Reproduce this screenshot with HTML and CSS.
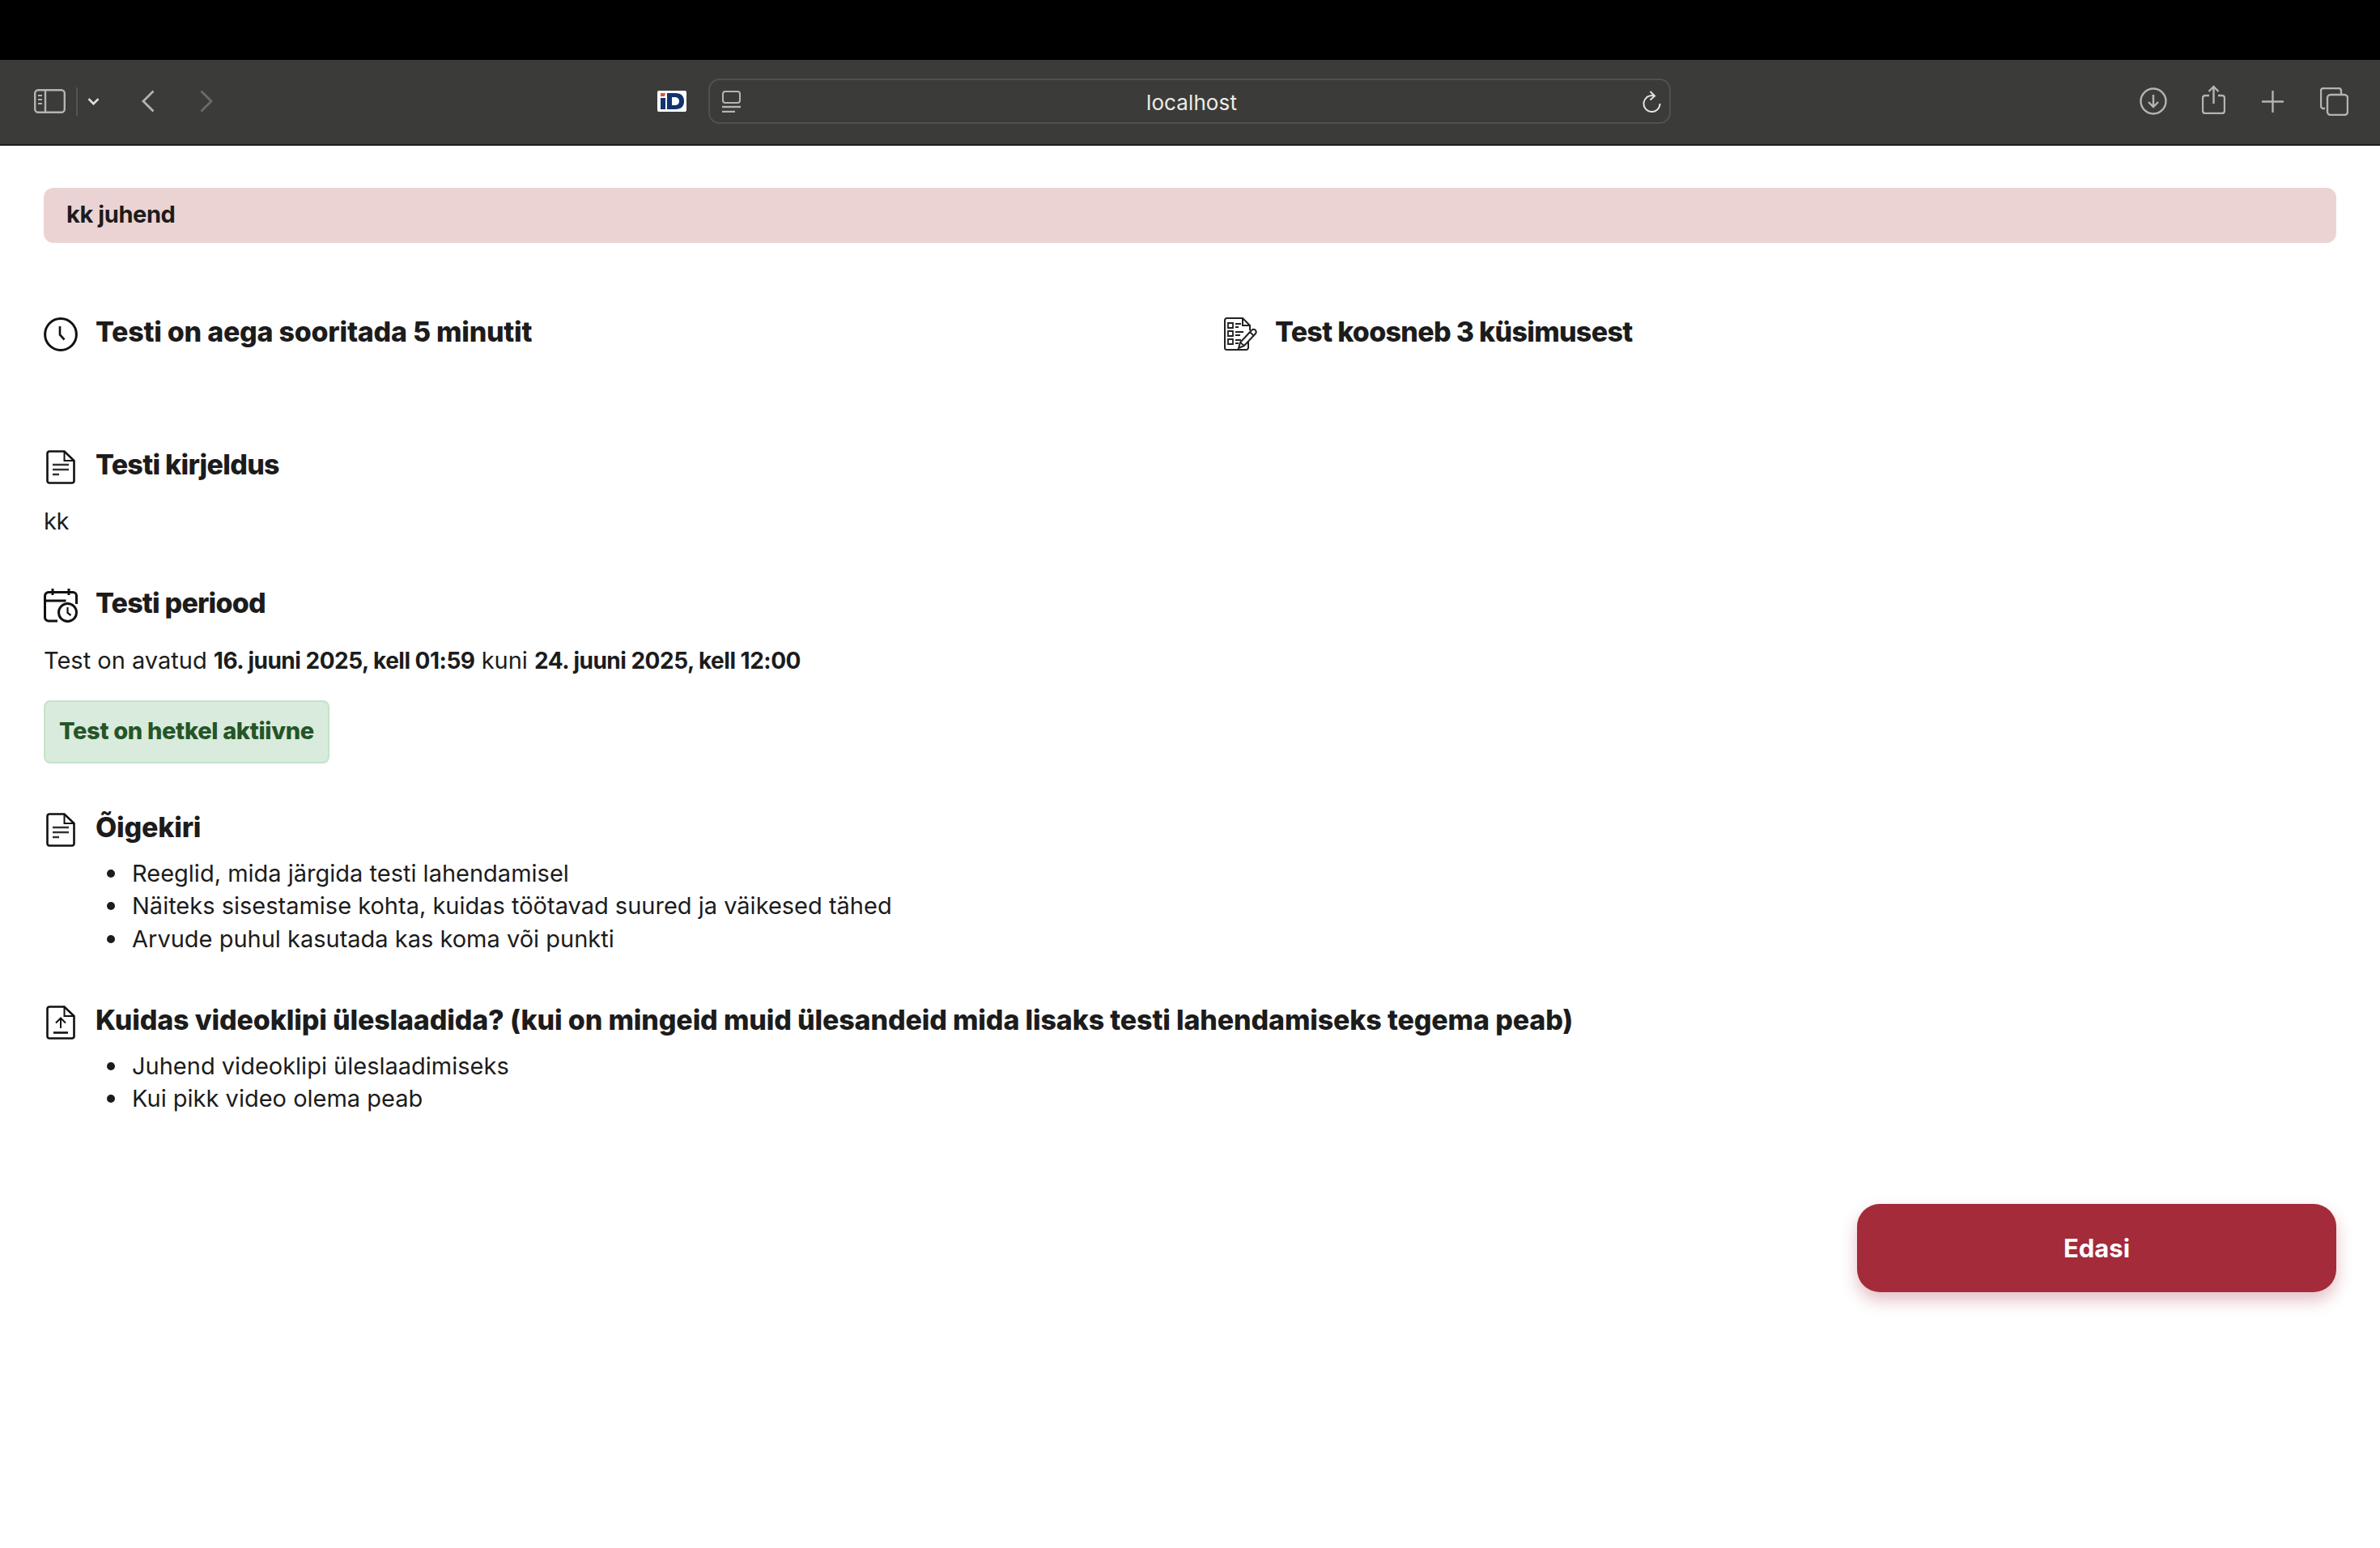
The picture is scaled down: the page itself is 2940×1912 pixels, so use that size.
FILE: index.html
```html
<!DOCTYPE html>
<html lang="et">
<head>
  <meta charset="UTF-8">
  <title>kk juhend</title>
  <link rel="stylesheet" href="styles.css">
</head>
<body>

  <div class="topbar"></div>

  <header class="toolbar">
    <div class="toolbar-left">
      <svg class="ico-sidebar" width="39" height="30" viewBox="0 0 39 30" fill="none" stroke="#b4b4b2" stroke-width="2.4">
        <rect x="1.2" y="1.2" width="36.6" height="27.6" rx="4"/>
        <path d="M14 1.2v27.6"/>
        <path d="M5 8h5M5 13h5M5 18h5" stroke-width="2"/>
      </svg>
      <span class="divider"></span>
      <svg class="ico-chevron" width="15" height="9" viewBox="0 0 15 9" fill="none" stroke="#e2e2e0" stroke-width="2.6">
        <path d="M1.5 1.2l6 6 6-6"/>
      </svg>
      <svg class="ico-back" width="16" height="28" viewBox="0 0 16 28" fill="none" stroke="#b4b4b2" stroke-width="2.8">
        <path d="M14.5 1.5L2 14l12.5 12.5"/>
      </svg>
      <svg class="ico-forward" width="16" height="28" viewBox="0 0 16 28" fill="none" stroke="#6b6b69" stroke-width="2.8">
        <path d="M1.5 1.5L14 14 1.500 26.500"/>
      </svg>
      <svg class="ico-favicon" width="36" height="26" viewBox="0 0 36 26">
        <rect width="36" height="26" rx="2" fill="#fff"/>
        <path d="M4 3h6l-1 4H4z" fill="#e4572e"/>
        <path d="M4 9h6v14H4zM12 3h10c8 0 11 4 11 10s-3 10-11 10H12zM18 8v10h3c4 0 6-2 6-5s-2-5-6-5z" fill="#12336e" fill-rule="evenodd"/>
      </svg>
    </div>

    <div class="address">
      <svg width="23" height="27" viewBox="0 0 23 27" fill="none" stroke="#b4b4b2" stroke-width="2">
        <rect x="1" y="1" width="21" height="14" rx="3"/>
        <path d="M0 20h23" stroke-width="2.400"/>
        <path d="M0 26h16" stroke-width="2.400"/>
      </svg>
      <span class="address-text">localhost</span>
      <svg width="23" height="27" viewBox="0 0 23 27" fill="none" stroke="#e2e2e0" stroke-width="2">
        <path d="M14.500 6.500A10 10 0 1 0 21.500 16"/>
        <path d="M9.500 1l5.500 5.500-5.500 5"/>
      </svg>
    </div>

    <div class="toolbar-right">
      <svg class="ico-download" width="34" height="34" viewBox="0 0 34 34" fill="none" stroke="#b4b4b2" stroke-width="2.400">
        <circle cx="17" cy="17" r="15.500"/>
        <path d="M17 9v15M11 18l6 6 6-6"/>
      </svg>
      <svg class="ico-share" width="29" height="36" viewBox="0 0 29 36" fill="none" stroke="#b4b4b2" stroke-width="2.400">
        <path d="M9 13H4a3 3 0 0 0-3 3v16a3 3 0 0 0 3 3h21a3 3 0 0 0 3-3V16a3 3 0 0 0-3-3h-5"/>
        <path d="M14.500 23V2M8.500 8l6-6 6 6"/>
      </svg>
      <svg class="ico-plus" width="27" height="27" viewBox="0 0 27 27" fill="none" stroke="#b4b4b2" stroke-width="2.400">
        <path d="M13.500 0v27M0 13.500h27"/>
      </svg>
      <svg class="ico-tabs" width="35" height="35" viewBox="0 0 35 35" fill="none" stroke="#b4b4b2" stroke-width="2.400">
        <path d="M6 26H4a3 3 0 0 1-3-3V4a3 3 0 0 1 3-3h19a3 3 0 0 1 3 3v4"/>
        <rect x="9" y="9" width="25" height="25" rx="4"/>
      </svg>
    </div>
  </header>

  <main class="content">
    <div class="banner">kk juhend</div>

    <div class="info-grid">
      <div class="heading-row">
        <svg class="icon" viewBox="0 0 42 42" fill="none" stroke="#111" stroke-width="3">
          <circle cx="21" cy="21" r="19.400"/>
          <path d="M20 11v10.500l5.500 6" stroke-width="2.600"/>
        </svg>
        <h3 class="h-aeg">Testi on aega sooritada 5 minutit</h3>
      </div>
      <div class="heading-row">
        <svg class="icon" viewBox="0 0 42 42" fill="none" stroke="#222" stroke-width="2">
          <path d="M31 29v8.500a2.500 2.500 0 0 1-2.500 2.500h-24A2.500 2.500 0 0 1 2 37.500v-34A2.500 2.500 0 0 1 4.500 1H24l9 9v6"/>
          <path d="M24 1v9h9"/>
          <path d="M6 7h6v6H6zM6 17h6v6H6zM6 27h6v6H6z" stroke-width="1.800"/>
          <path d="M15 8h7M15 12h4M15 18h10M15 22h6M15 28h7M15 32h4" stroke-width="1.800"/>
          <path d="M19 38l2-7 14-15a3 3 0 0 1 5 4L26 35z"/>
          <path d="M21 31l5 4M33 18l4.500 4.500" stroke-width="1.800"/>
        </svg>
        <h3 class="h-koosneb">Test koosneb 3 küsimusest</h3>
      </div>
    </div>

    <section class="block block-kirjeldus">
      <div class="heading-row">
        <svg class="icon" viewBox="0 0 42 42" fill="none" stroke="#111" stroke-width="2.600">
          <path d="M7 1.500h18.500L37.500 13v25a2.500 2.500 0 0 1-2.500 2.500H7A2.500 2.500 0 0 1 4.500 38V4A2.500 2.500 0 0 1 7 1.500z"/>
          <path d="M25.500 1.500V13h12" stroke-width="2"/>
          <path d="M11 18h20M11 24h20M11 30h8" stroke="#333"/>
        </svg>
        <h3 class="h-kirjeldus">Testi kirjeldus</h3>
      </div>
      <p class="text text-kk">kk</p>
    </section>

    <section class="block block-periood">
      <div class="heading-row">
        <svg class="icon" viewBox="0 0 42 42" fill="none" stroke="#111" stroke-width="3">
          <path d="M17 40H6a4.500 4.500 0 0 1-4.500-4.500V9A4.500 4.500 0 0 1 6 4.500h30A4.500 4.500 0 0 1 40.500 9v10"/>
          <path d="M11 0v8M31 0v8M1.500 15h26"/>
          <circle cx="29.500" cy="29.500" r="11"/>
          <path d="M29.500 23v7l4 3" stroke-width="2.200"/>
        </svg>
        <h3 class="h-periood">Testi periood</h3>
      </div>
      <p class="text text-first">Test on avatud <b>16. juuni 2025, kell 01:59</b> kuni <b>24. juuni 2025, kell 12:00</b></p>
      <div class="status">Test on hetkel aktiivne</div>
    </section>

    <section class="block block-oigekiri">
      <div class="heading-row">
        <svg class="icon" viewBox="0 0 42 42" fill="none" stroke="#111" stroke-width="2.600">
          <path d="M7 1.500h18.500L37.500 13v25a2.500 2.500 0 0 1-2.500 2.500H7A2.500 2.500 0 0 1 4.500 38V4A2.500 2.500 0 0 1 7 1.500z"/>
          <path d="M25.500 1.500V13h12" stroke-width="2"/>
          <path d="M11 18h20M11 24h20M11 30h8" stroke="#333"/>
        </svg>
        <h3>Õigekiri</h3>
      </div>
      <ul class="rules">
        <li>Reeglid, mida järgida testi lahendamisel</li>
        <li>Näiteks sisestamise kohta, kuidas töötavad suured ja väikesed tähed</li>
        <li>Arvude puhul kasutada kas koma või punkti</li>
      </ul>
    </section>

    <section class="block block-video">
      <div class="heading-row">
        <svg class="icon" viewBox="0 0 42 42" fill="none" stroke="#111" stroke-width="2.600">
          <path d="M7 1.500h18.500L37.500 13v25a2.500 2.500 0 0 1-2.500 2.500H7A2.500 2.500 0 0 1 4.500 38V4A2.500 2.500 0 0 1 7 1.500z"/>
          <path d="M25.500 1.500V13h12" stroke-width="2"/>
          <path d="M21 28V16M15 21.500l6-6 6 6" stroke-width="2"/>
          <path d="M12 33.500h18"/>
        </svg>
        <h3 class="h-kuidas">Kuidas videoklipi üleslaadida? (kui on mingeid muid ülesandeid mida lisaks testi lahendamiseks tegema peab)</h3>
      </div>
      <ul class="rules">
        <li>Juhend videoklipi üleslaadimiseks</li>
        <li>Kui pikk video olema peab</li>
      </ul>
    </section>

    <div class="actions">
      <button class="next">Edasi</button>
    </div>
  </main>

</body>
</html>
```

FILE: styles.css
```css
* {
  box-sizing: border-box;
}

body {
  margin: 0;
  min-height: 1912px;
  background-color: #fff;
  color: #1c1c1c;
  font-family: Inter, "Open Sans", sans-serif;
}

.topbar {
  height: 74px;
  background-color: #000;
}

/* browser toolbar */
.toolbar {
  display: flex;
  align-items: center;
  height: 106px;
  padding-bottom: 2px;
  background-color: #3b3b39;
  border-bottom: 2px solid #1e1e1e;
}

.toolbar svg {
  display: block;
  flex: none;
}

.toolbar-left {
  display: flex;
  align-items: center;
  width: 875px;
  padding-left: 42px;
}

.divider {
  width: 2px;
  height: 35px;
  margin-left: 13px;
  background-color: #545452;
}

.ico-chevron {
  margin-left: 12px;
}

.ico-back {
  margin-left: 52px;
}

.ico-forward {
  margin-left: 56px;
}

.ico-favicon {
  margin-left: 549px;
}

.address {
  display: flex;
  align-items: center;
  justify-content: space-between;
  width: 1189px;
  height: 56px;
  padding: 0 10px 0 15px;
  border: 2px solid #515150;
  border-radius: 14px;
}

.address-text {
  padding-top: 2px;
  color: #ececea;
  font-size: 26px;
  letter-spacing: 0.1px;
}

.toolbar-right {
  display: flex;
  align-items: center;
  flex: 1;
  padding-left: 579px;
}

.ico-share {
  margin-left: 43px;
  margin-top: -4px;
}

.ico-plus {
  margin-left: 45px;
}

.ico-tabs {
  margin-left: 45px;
}

/* page */
.content {
  padding: 52px 54px 0;
}

.banner {
  display: flex;
  align-items: center;
  height: 68px;
  padding: 0 0 3px 28px;
  border-radius: 12px;
  background-color: #ecd3d3;
  font-size: 29px;
  font-weight: 700;
  letter-spacing: -0.4px;
}

.info-grid {
  display: grid;
  grid-template-columns: 1458px 1fr;
  margin-top: 92px;
}

.heading-row {
  display: flex;
  align-items: flex-start;
  gap: 22px;
}

.info-grid .heading-row + .heading-row {
  margin-left: -1px;
}

.icon {
  display: block;
  flex: none;
  width: 42px;
  height: 42px;
}

h3 {
  margin: 0;
  font-size: 34px;
  font-weight: 800;
  line-height: 36px;
  letter-spacing: -0.2px;
}

.h-aeg {
  letter-spacing: -0.25px;
}

.h-koosneb {
  letter-spacing: -0.7px;
}

.h-kirjeldus {
  letter-spacing: -0.7px;
}

.h-periood {
  letter-spacing: -0.8px;
}

.h-kuidas {
  letter-spacing: -0.15px;
}

.block-kirjeldus {
  margin-top: 122px;
}

.block-periood {
  margin-top: 63px;
}

.block-oigekiri {
  margin-top: 61px;
}

.block-video {
  margin-top: 62px;
}

.text {
  margin: 0;
  font-size: 29px;
  line-height: 40px;
}

.text b {
  font-size: 28px;
  font-weight: 700;
  letter-spacing: -0.5px;
}

.text-kk {
  margin-top: 26px;
  letter-spacing: -0.5px;
}

.text-first {
  margin-top: 27px;
}

.status {
  width: fit-content;
  height: 78px;
  margin-top: 29px;
  padding: 0 17px;
  border: 2px solid #c5e3ca;
  border-radius: 8px;
  background-color: #d9ebdc;
  color: #255528;
  font-size: 29px;
  font-weight: 800;
  line-height: 72px;
  letter-spacing: -0.33px;
}

.rules {
  margin: 13px 0 0;
  padding-left: 109px;
  list-style: none;
  font-size: 29px;
  line-height: 40.300px;
}

.rules li {
  display: flex;
  align-items: center;
}

.rules li::before {
  content: "";
  flex: none;
  width: 10px;
  height: 10px;
  margin: 0 21px 0 -31px;
  border-radius: 50%;
  background-color: #1c1c1c;
}

.actions {
  display: flex;
  justify-content: flex-end;
  margin-top: 110px;
}

.next {
  width: 592px;
  height: 109px;
  border: none;
  border-radius: 28px;
  background-color: #a32b3a;
  color: #fff;
  font-family: inherit;
  font-size: 31px;
  font-weight: 700;
  box-shadow: 0 10px 20px rgba(163, 43, 58, 0.3);
}
```
